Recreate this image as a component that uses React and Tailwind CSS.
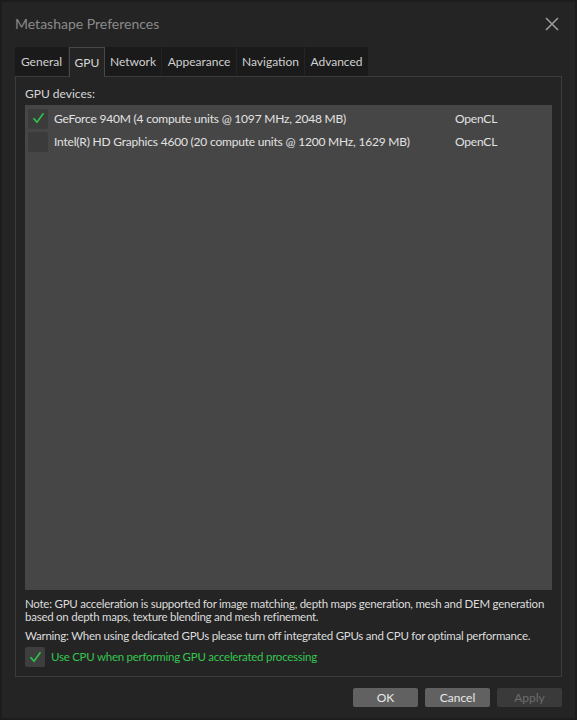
import React from 'react';

const font = { fontFamily: 'Lato, "Noto Sans", sans-serif' };

function Check() {
    return (
        <svg viewBox="0 0 20 20" className="w-[15px] h-[15px]">
            <path d="M4 10.5 L8 15 L16 4" fill="none" stroke="#2fc24a" strokeWidth="2.2" strokeLinecap="square" />
        </svg>
    );
}

function Box({ checked, className }) {
    return (
        <div className={`w-[20px] h-[20px] shrink-0 rounded-[2px] flex items-center justify-center ${className}`}>
            {checked && <Check />}
        </div>
    );
}

const tabs = ['General', 'GPU', 'Network', 'Appearance', 'Navigation', 'Advanced'];
const tabWidths = ['w-[54px]', 'w-[36px]', 'w-[57px]', 'w-[75px]', 'w-[68px]', 'w-[64px]'];

const devices = [
    { name: 'GeForce 940M (4 compute units @ 1097 MHz, 2048 MB)', api: 'OpenCL', on: true },
    { name: 'Intel(R) HD Graphics 4600 (20 compute units @ 1200 MHz, 1629 MB)', api: 'OpenCL', on: false },
];

export default function App() {
    return (
        <div className="w-[577px] h-[720px] bg-[#1c1c1c] p-[2px]" style={font}>
            <div className="h-full bg-[#242424] flex flex-col px-[13px] text-[12px] text-[#d6d6d6]">
                {/* Title bar */}
                <div className="h-[45px] shrink-0 flex items-center justify-between pb-[2px]">
                    <span className="text-[14px] text-[#8a8a8a]">Metashape Preferences</span>
                    <svg viewBox="0 0 14 14" className="w-[14px] h-[14px] mr-[3px]">
                        <path d="M1 1 L13 13 M13 1 L1 13" stroke="#9a9a9a" strokeWidth="1.6" />
                    </svg>
                </div>

                {/* Tabs */}
                <div className="flex h-[29px] shrink-0">
                    {tabs.map((t, i) => (
                        <div
                            key={t}
                            className={`${tabWidths[i]} flex items-center justify-center ${
                                t === 'GPU'
                                    ? 'bg-[#242424] border border-b-0 border-[#474747] relative -mb-px z-10'
                                    : 'bg-[#1a1a1a] border-r border-[#242424] text-[#d0d0d0]'
                            }`}
                        >
                            {t}
                        </div>
                    ))}
                </div>

                {/* Panel */}
                <div className="h-[601px] shrink-0 border border-[#3c3c3c] flex flex-col px-[9px]">
                    <div className="h-[28px] shrink-0 flex items-center pt-[5px]">GPU devices:</div>
                    <div className="h-[485px] shrink-0 bg-[#464646] px-[3px] pt-[2px]">
                        {devices.map((d) => (
                            <div key={d.name} className="h-[23px] flex items-center tracking-[-0.2px]">
                                <Box checked={d.on} className="bg-[#3b3b3b]" />
                                <span className="ml-[6px] w-[401px] text-[#e2e2e2]">{d.name}</span>
                                <span className="text-[#e2e2e2]">{d.api}</span>
                            </div>
                        ))}
                    </div>
                    <div className="mt-[7px] leading-[13px] text-[11.5px] tracking-[-0.25px] text-[#dcdcdc]">
                        Note: GPU acceleration is supported for image matching, depth maps generation, mesh and DEM generation based on depth maps, texture blending and mesh refinement.
                    </div>
                    <div className="mt-[6px] leading-[13px] text-[11.5px] tracking-[-0.25px] text-[#dcdcdc]">
                        Warning: When using dedicated GPUs please turn off integrated GPUs and CPU for optimal performance.
                    </div>
                    <div className="mt-[5px] flex items-center">
                        <Box checked className="bg-[#3e3e3e]" />
                        <span className="ml-[6px] text-[11.5px] tracking-[-0.25px] text-[#35c650]">Use CPU when performing GPU accelerated processing</span>
                    </div>
                </div>

                {/* Buttons */}
                <div className="flex justify-end gap-[7px] mt-[11px]">
                    <button className="w-[65px] h-[19px] rounded-[2px] bg-[#616161] text-[#e8e8e8] text-[12px] leading-none">OK</button>
                    <button className="w-[65px] h-[19px] rounded-[2px] bg-[#616161] text-[#e8e8e8] text-[12px] leading-none">Cancel</button>
                    <button className="w-[65px] h-[19px] rounded-[2px] bg-[#3a3a3a] text-[#6c6c6c] text-[12px] leading-none">Apply</button>
                </div>
            </div>
        </div>
    );
}
